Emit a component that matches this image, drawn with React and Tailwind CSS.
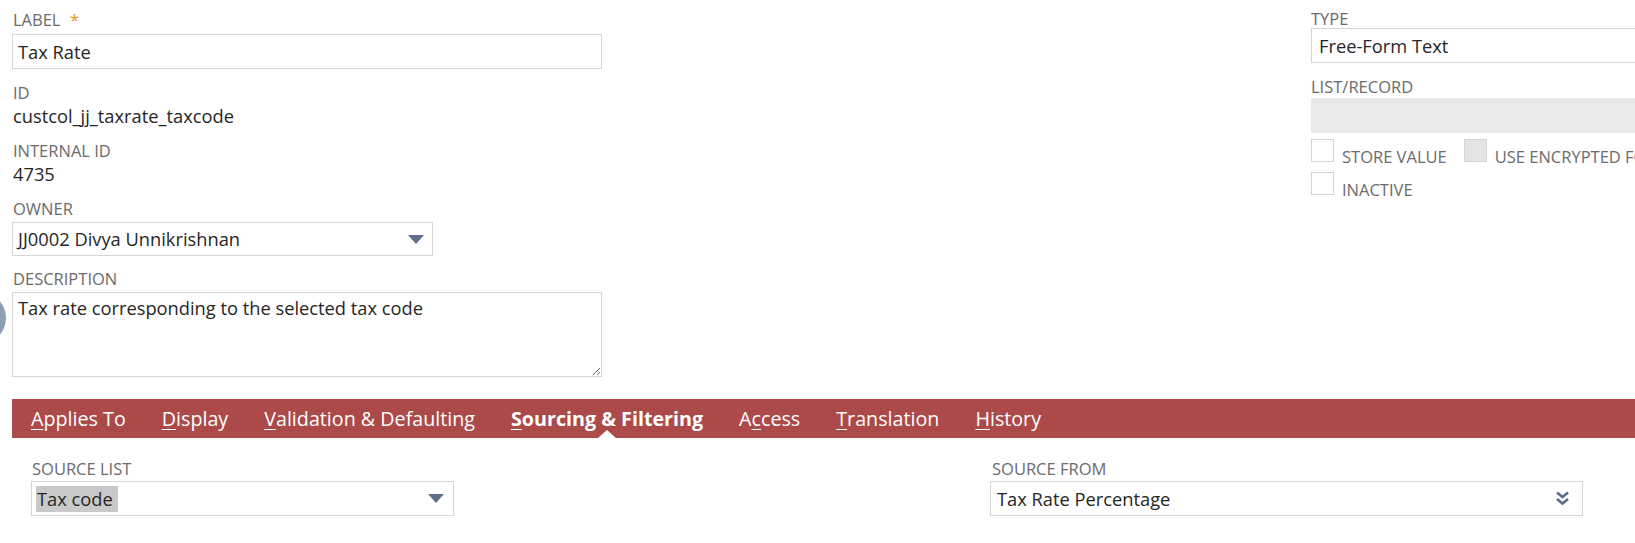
import React from "react";

const font = { fontFamily: '"Open Sans", "Liberation Sans", sans-serif' };

function FieldLabel({ children, className = "" }) {
  return (
    <div className={`h-[20px] leading-[20px] text-[16.5px] uppercase text-[#6b6b6b] ${className}`}>
      {children}
    </div>
  );
}

function Triangle() {
  return (
    <svg width="16" height="9" viewBox="0 0 16 9">
      <path d="M0 0 H16 L8 9 Z" fill="#5b6f8c" />
    </svg>
  );
}

function DoubleChevron() {
  return (
    <svg width="13" height="15" viewBox="0 0 13 15">
      <path d="M1 1.5 L6.5 6 L12 1.5" stroke="#5b6f8c" strokeWidth="2.6" fill="none" />
      <path d="M1 8 L6.5 12.5 L12 8" stroke="#5b6f8c" strokeWidth="2.6" fill="none" />
    </svg>
  );
}

function Checkbox({ disabled, label }) {
  return (
    <div className="flex items-end gap-[8px] shrink-0">
      <div
        className={`w-[23px] h-[23px] shrink-0 border border-[#d4d4d4] ${
          disabled ? "bg-[#e4e4e4]" : "bg-white"
        }`}
      />
      <span className="text-[16.5px] leading-[18px] uppercase whitespace-nowrap text-[#6b6b6b] -mb-[4px]">
        {label}
      </span>
    </div>
  );
}

const tabs = [
  { pre: "", key: "A", post: "pplies To" },
  { pre: "", key: "D", post: "isplay" },
  { pre: "", key: "V", post: "alidation & Defaulting" },
  { pre: "", key: "S", post: "ourcing & Filtering", active: true },
  { pre: "A", key: "c", post: "cess" },
  { pre: "", key: "T", post: "ranslation" },
  { pre: "", key: "H", post: "istory" },
];

export default function App() {
  return (
    <div className="relative w-[1635px] h-[543px] overflow-hidden bg-white text-[#262626]" style={font}>
      {/* floating help bubble cut off at the left */}
      <div className="absolute left-[-46px] top-[292px] w-[52px] h-[52px] rounded-full bg-[#8e9db2]" />

      <div className="flex pt-[10px]">
        {/* left column */}
        <div className="ml-[12px] w-[590px] shrink-0 flex flex-col">
          <FieldLabel className="pl-[1px]">
            Label <span className="text-[#e29b2a] text-[17px] ml-[5px]">*</span>
          </FieldLabel>
          <div className="mt-[4px] h-[35px] border border-[#d6d6d6] flex items-center pl-[5px] text-[18.3px]">
            Tax Rate
          </div>

          <FieldLabel className="mt-[14px] pl-[1px]">ID</FieldLabel>
          <div className="h-[26px] leading-[26px] text-[18.3px] pl-[1px]">custcol_jj_taxrate_taxcode</div>

          <FieldLabel className="mt-[12px] pl-[1px]">Internal ID</FieldLabel>
          <div className="h-[26px] leading-[26px] text-[18.3px] pl-[1px]">4735</div>

          <FieldLabel className="mt-[12px] pl-[1px]">Owner</FieldLabel>
          <div className="mt-[3px] w-[421px] h-[34px] border border-[#d6d6d6] flex items-center justify-between pl-[5px] pr-[8px] text-[18.3px]">
            <span>JJ0002 Divya Unnikrishnan</span>
            <Triangle />
          </div>

          <FieldLabel className="mt-[13px] pl-[1px]">Description</FieldLabel>
          <textarea
            readOnly
            defaultValue="Tax rate corresponding to the selected tax code"
            className="mt-[3px] h-[85px] border border-[#d6d6d6] px-[5px] pt-[3px] text-[18.3px] leading-[24px] text-[#262626] outline-none"
          />
        </div>

        {/* right column */}
        <div className="ml-[709px] w-[400px] shrink-0 flex flex-col -mt-[1px]">
          <FieldLabel>Type</FieldLabel>
          <div className="-mt-[1px] h-[35px] border border-[#d6d6d6] flex items-center pl-[7px] text-[18.3px]">
            Free-Form Text
          </div>
          <FieldLabel className="mt-[14px]">List/Record</FieldLabel>
          <div className="mt-[1px] h-[35px] bg-[#e9e9e9]" />
          <div className="mt-[6px] flex gap-[17px]">
            <Checkbox label="Store Value" />
            <Checkbox disabled label="Use Encrypted Format" />
          </div>
          <div className="mt-[10px] flex">
            <Checkbox label="Inactive" />
          </div>
        </div>
      </div>

      {/* tab bar */}
      <div className="mt-[22px] ml-[12px] h-[39px] bg-[#ac4a4a] flex items-center pl-[19px] gap-[36px] text-white text-[19.7px]">
        {tabs.map((t) => (
          <div key={t.key + t.post} className={`relative h-full flex items-center ${t.active ? "font-bold" : ""}`}>
            <span>
              {t.pre}
              <span className="underline underline-offset-[3px] decoration-1">{t.key}</span>
              {t.post}
            </span>
            {t.active && (
              <svg className="absolute bottom-0 left-1/2 -translate-x-1/2" width="18" height="8" viewBox="0 0 18 8">
                <path d="M0 8 L9 0 L18 8 Z" fill="#ffffff" />
              </svg>
            )}
          </div>
        ))}
      </div>

      {/* sourcing & filtering content */}
      <div className="flex mt-[21px]">
        <div className="ml-[31px] w-[423px] shrink-0 flex flex-col">
          <FieldLabel className="pl-[1px]">Source List</FieldLabel>
          <div className="mt-[2px] h-[35px] border border-[#d6d6d6] flex items-center justify-between pl-[4px] pr-[9px] text-[18.3px]">
            <span className="bg-[#c9c9c9] h-[26px] leading-[26px] pl-[1px] pr-[5px]">Tax code</span>
            <Triangle />
          </div>
        </div>
        <div className="ml-[536px] w-[593px] shrink-0 flex flex-col">
          <FieldLabel className="pl-[2px]">Source From</FieldLabel>
          <div className="mt-[2px] h-[35px] border border-[#d6d6d6] flex items-center justify-between pl-[6px] pr-[13px] text-[18.3px]">
            <span>Tax Rate Percentage</span>
            <DoubleChevron />
          </div>
        </div>
      </div>
    </div>
  );
}
